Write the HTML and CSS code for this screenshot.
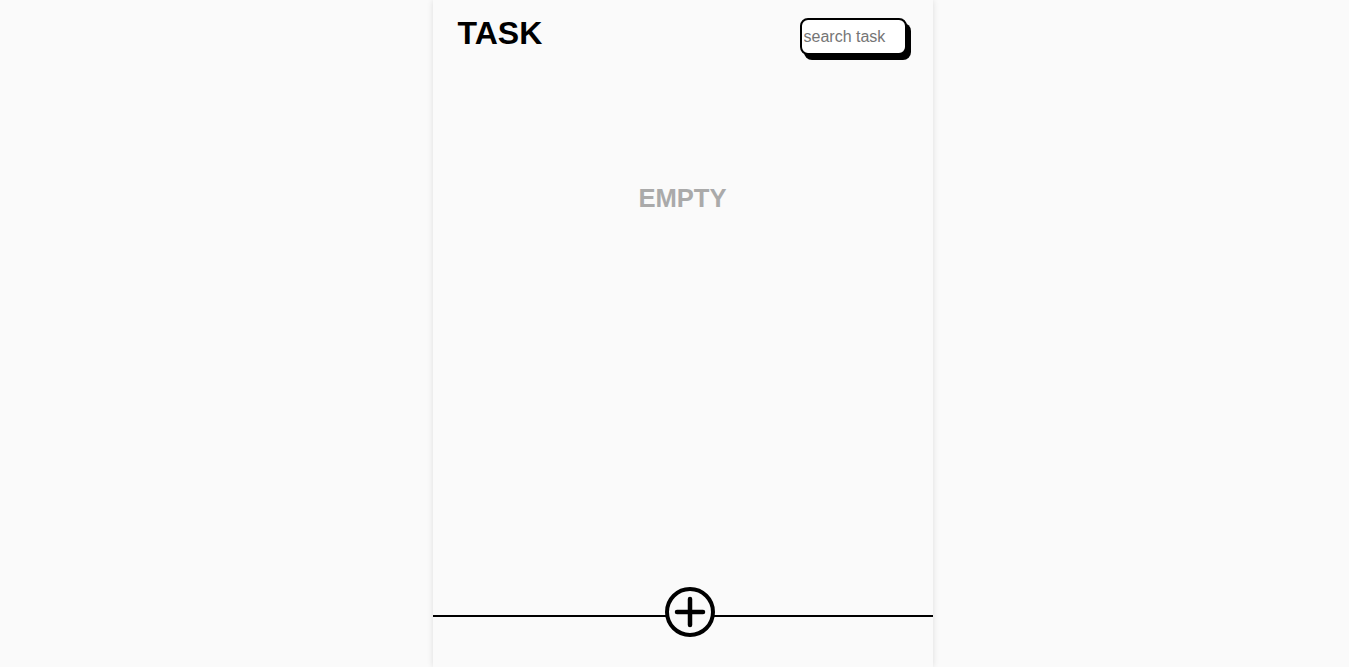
FILE: index.html
```html
<!DOCTYPE html>
<html lang="en">
<head>
<meta charset="utf-8">
<title>TASK</title>
<link rel="stylesheet" href="styles.css">
</head>
<body>
<div class="app">
  <header class="header">
    <h1 class="title">TASK</h1>
    <input class="search" type="text" placeholder="search task">
  </header>
  <main class="list">
    <p class="empty">EMPTY</p>
  </main>
  <footer class="footer">
    <button class="add" type="button" aria-label="add task">
      <svg width="50" height="50" viewBox="0 0 50 50">
        <circle cx="25" cy="25" r="23" fill="#fafafa" stroke="#000" stroke-width="4"/>
        <line x1="12" y1="25" x2="38" y2="25" stroke="#000" stroke-width="4.5" stroke-linecap="round"/>
        <line x1="25" y1="12" x2="25" y2="38" stroke="#000" stroke-width="4.5" stroke-linecap="round"/>
      </svg>
    </button>
  </footer>
</div>
</body>
</html>
```

FILE: styles.css
```css
html, body {
  margin: 0;
  padding: 0;
  background: #fafafa;
  font-family: "Liberation Sans", Arial, sans-serif;
}

.app {
  width: 500px;
  height: 667px;
  margin-left: calc(50% - 242px);
  background: #fafafa;
  box-shadow: 0 0 6px rgba(0, 0, 0, 0.12);
  display: flex;
  flex-direction: column;
  position: relative;
}

.header {
  display: flex;
  justify-content: space-between;
  align-items: flex-start;
  padding: 18px 26px 0 25px;
}

.title {
  margin: -1px 0 0;
  font-size: 32px;
  font-weight: bold;
  line-height: 32px;
  color: #000;
}

.search {
  box-sizing: border-box;
  width: 107px;
  height: 37px;
  border: 2px solid #000;
  border-radius: 8px;
  box-shadow: 4px 5px 0 #000;
  background: #fff;
  padding: 0 2px;
  font-family: "Liberation Sans", Arial, sans-serif;
  font-size: 16px;
  color: #000;
  outline: none;
  margin: 0;
}

.search::placeholder {
  color: #757575;
}

.list {
  flex: 1;
  display: flex;
  flex-direction: column;
  align-items: center;
}

.empty {
  margin: 129px 0 0;
  font-size: 25.6px;
  font-weight: bold;
  line-height: 28px;
  color: #aaaaaa;
}

.footer {
  position: relative;
  height: 2px;
  background: #000;
  margin-bottom: 50px;
}

.add {
  position: absolute;
  left: 232px;
  top: -28px;
  width: 50px;
  height: 50px;
  padding: 0;
  border: none;
  background: transparent;
  cursor: pointer;
}

.add svg {
  display: block;
}
```
